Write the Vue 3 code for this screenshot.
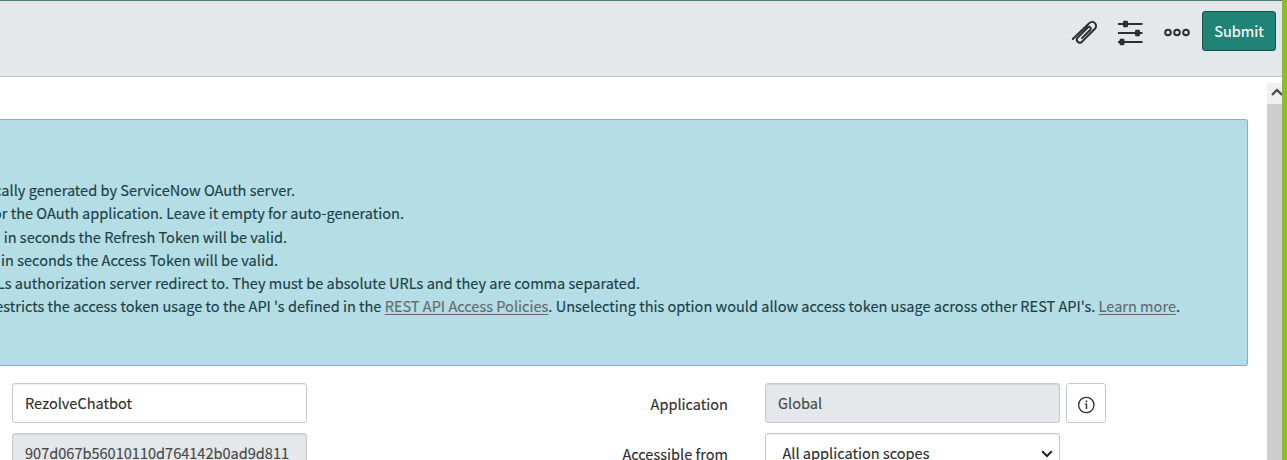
<script setup>
const notes = [
  { end: 295, parts: [{ text: 'cally generated by ServiceNow OAuth server.' }] },
  { end: 404, parts: [{ text: 'or the OAuth application. Leave it empty for auto-generation.' }] },
  { end: 287, parts: [{ text: 'in seconds the Refresh Token will be valid.' }] },
  { end: 278, parts: [{ text: 'in seconds the Access Token will be valid.' }] },
  { end: 640, parts: [{ text: 'Ls authorization server redirect to. They must be absolute URLs and they are comma separated.' }] },
  {
    end: 1180,
    parts: [
      { text: "estricts the access token usage to the API 's defined in the " },
      { text: 'REST API Access Policies', link: true },
      { text: ". Unselecting this option would allow access token usage across other REST API's. " },
      { text: 'Learn more', link: true },
      { text: '.' },
    ],
  },
]
</script>

<template>
  <div class="window">
    <div class="page">
      <header class="toolbar">
        <svg class="clip" viewBox="0 0 28 28" width="28" height="28">
          <path
            d="M1.8 20 18.2 4.2a3.9 3.9 0 0 1 5.7 5.6L10.6 23.1a3 3 0 0 1-4.2-4.2L17 8.3a1.7 1.7 0 0 1 2.4 2.4L11 19.1"
            fill="none" stroke="#2e2e2e" stroke-width="2" stroke-linecap="round" stroke-linejoin="round"
          />
        </svg>
        <svg class="sliders" viewBox="0 0 26 26" width="26" height="26">
          <path d="M1 4h24.5M1 13h24.5M1 22h24.5" stroke="#2e2e2e" stroke-width="2" />
          <path d="M6.5 .7h4v6.6h-4zM18.5 9.7h4v6.6h-4zM3 18.7h4v6.6H3z" fill="#2e2e2e" />
          <path d="M6 4h5M18 13h5M2.5 22h5" stroke="#2e2e2e" stroke-width="5" />
        </svg>
        <svg class="dots" viewBox="0 0 26 10" width="26" height="10">
          <g fill="none" stroke="#2e2e2e" stroke-width="2">
            <circle cx="4" cy="4.5" r="2.8" />
            <circle cx="13" cy="4.5" r="2.8" />
            <circle cx="22" cy="4.5" r="2.8" />
          </g>
        </svg>
        <button class="submit">Submit</button>
      </header>
      <div class="body">
        <main class="content">
          <section class="info">
            <p v-for="(n, i) in notes" :key="i" class="note" :style="{ width: n.end + 'px' }">
              <span class="run"><template v-for="(p, j) in n.parts" :key="j"><a v-if="p.link">{{ p.text }}</a><template v-else>{{ p.text }}</template></template></span>
            </p>
          </section>
          <form class="fields">
            <div class="field">RezolveChatbot</div>
            <label>Application</label>
            <div class="field readonly">Global</div>
            <div class="tip">
              <svg viewBox="0 0 18 18" width="18" height="18">
                <circle cx="9.3" cy="9" r="7.7" fill="none" stroke="#2e2e2e" stroke-width="1.3" />
                <path d="M8.6 4.5h1.7v1.7H8.6zM7.8 7.4h2.4v5.6H8.8V8.5h-1z" fill="#2e2e2e" />
              </svg>
            </div>
            <div class="field readonly">907d067b56010110d764142b0ad9d811</div>
            <label>Accessible from</label>
            <div class="field select">
              <span>All application scopes</span>
              <svg viewBox="0 0 12 8" width="12" height="8"><path d="M1.2 1.2 6 6l4.8-4.8" fill="none" stroke="#222" stroke-width="2" /></svg>
            </div>
          </form>
        </main>
        <aside class="scrollbar">
          <div class="up">
            <svg viewBox="0 0 12 8" width="12" height="8"><path d="M1 7 6 2l5 5" fill="none" stroke="#505050" stroke-width="2.4" /></svg>
          </div>
        </aside>
      </div>
    </div>
    <div class="edge"></div>
  </div>
</template>

<style>
body { background: #fff; overflow: hidden; }
</style>

<style scoped>
* { box-sizing: border-box; }
.window {
  display: flex;
  width: 1287px;
  height: 460px;
  overflow: hidden;
  font: 14.55px/23.2px "Noto Sans CJK SC", "Noto Sans", sans-serif;
  color: #2e2e2e;
  -webkit-text-stroke: 0.15px;
}
.page { width: 1282px; height: 460px; overflow: hidden; }
.edge { width: 5px; background: #8abf27; }
.toolbar {
  display: flex;
  justify-content: flex-end;
  height: 77px;
  padding: 10px 6px 0 0;
  background: #e4e8eb;
  border-top: 1px solid #517c70;
  border-bottom: 1px solid #c8c8c8;
}
.clip { margin: 8px 18px 0 0; }
.sliders { margin: 9px 21px 0 0; }
.dots { margin: 17px 12px 0 0; }
.submit {
  width: 74px;
  height: 40px;
  padding: 0;
  border: 1px solid #135448;
  border-radius: 3px;
  background: #208375;
  color: #fff;
  font: inherit;
}
.body { display: flex; height: 383px; }
.content { width: 1267px; padding-top: 42px; }
.info {
  width: 1248px;
  height: 247px;
  padding-top: 58.2px;
  overflow: hidden;
  border: 1px solid #6cb9c9;
  border-left: 0;
  border-radius: 0 3px 3px 0;
  background: #b4dde5;
  color: #1c4047;
}
.note {
  display: flex;
  justify-content: flex-end;
  height: 23.2px;
  margin: 0;
  white-space: nowrap;
}
.run { flex: none; white-space: pre; }
.run a { color: #666a6c; text-decoration: underline; text-underline-offset: 2px; }
.fields {
  display: grid;
  grid-template-columns: 295px 421px 37px 295px 6px 40px;
  grid-auto-rows: 40px;
  row-gap: 10px;
  padding: 17px 0 0 12px;
}
.field {
  padding: 7px 12px;
  border: 1px solid #c8c8c8;
  border-radius: 3px;
  background: #fff;
  box-shadow: inset 0 1px 1px rgba(0, 0, 0, 0.075);
  white-space: nowrap;
}
.fields > :nth-child(3), .fields > :nth-child(7) { grid-column: 4; }
.fields > :nth-child(5) { grid-column: 1; }
.field.readonly { background: #e4e8eb; color: #484848; }
.field.select { display: flex; justify-content: space-between; padding: 7px 6px 7px 16.5px; }
.field.select svg { margin-top: 9px; }
label { padding-top: 9px; text-align: right; }
.tip {
  display: flex;
  grid-column: 6;
  justify-content: center;
  padding-top: 12px;
  border: 1px solid #c8c8c8;
  border-radius: 3px;
}
.scrollbar { width: 15px; margin-top: 6px; overflow: hidden; background: #cdcdcd; }
.up { height: 21px; padding: 5px 0 0 4px; background: #f0f0f0; line-height: 0; }
</style>
